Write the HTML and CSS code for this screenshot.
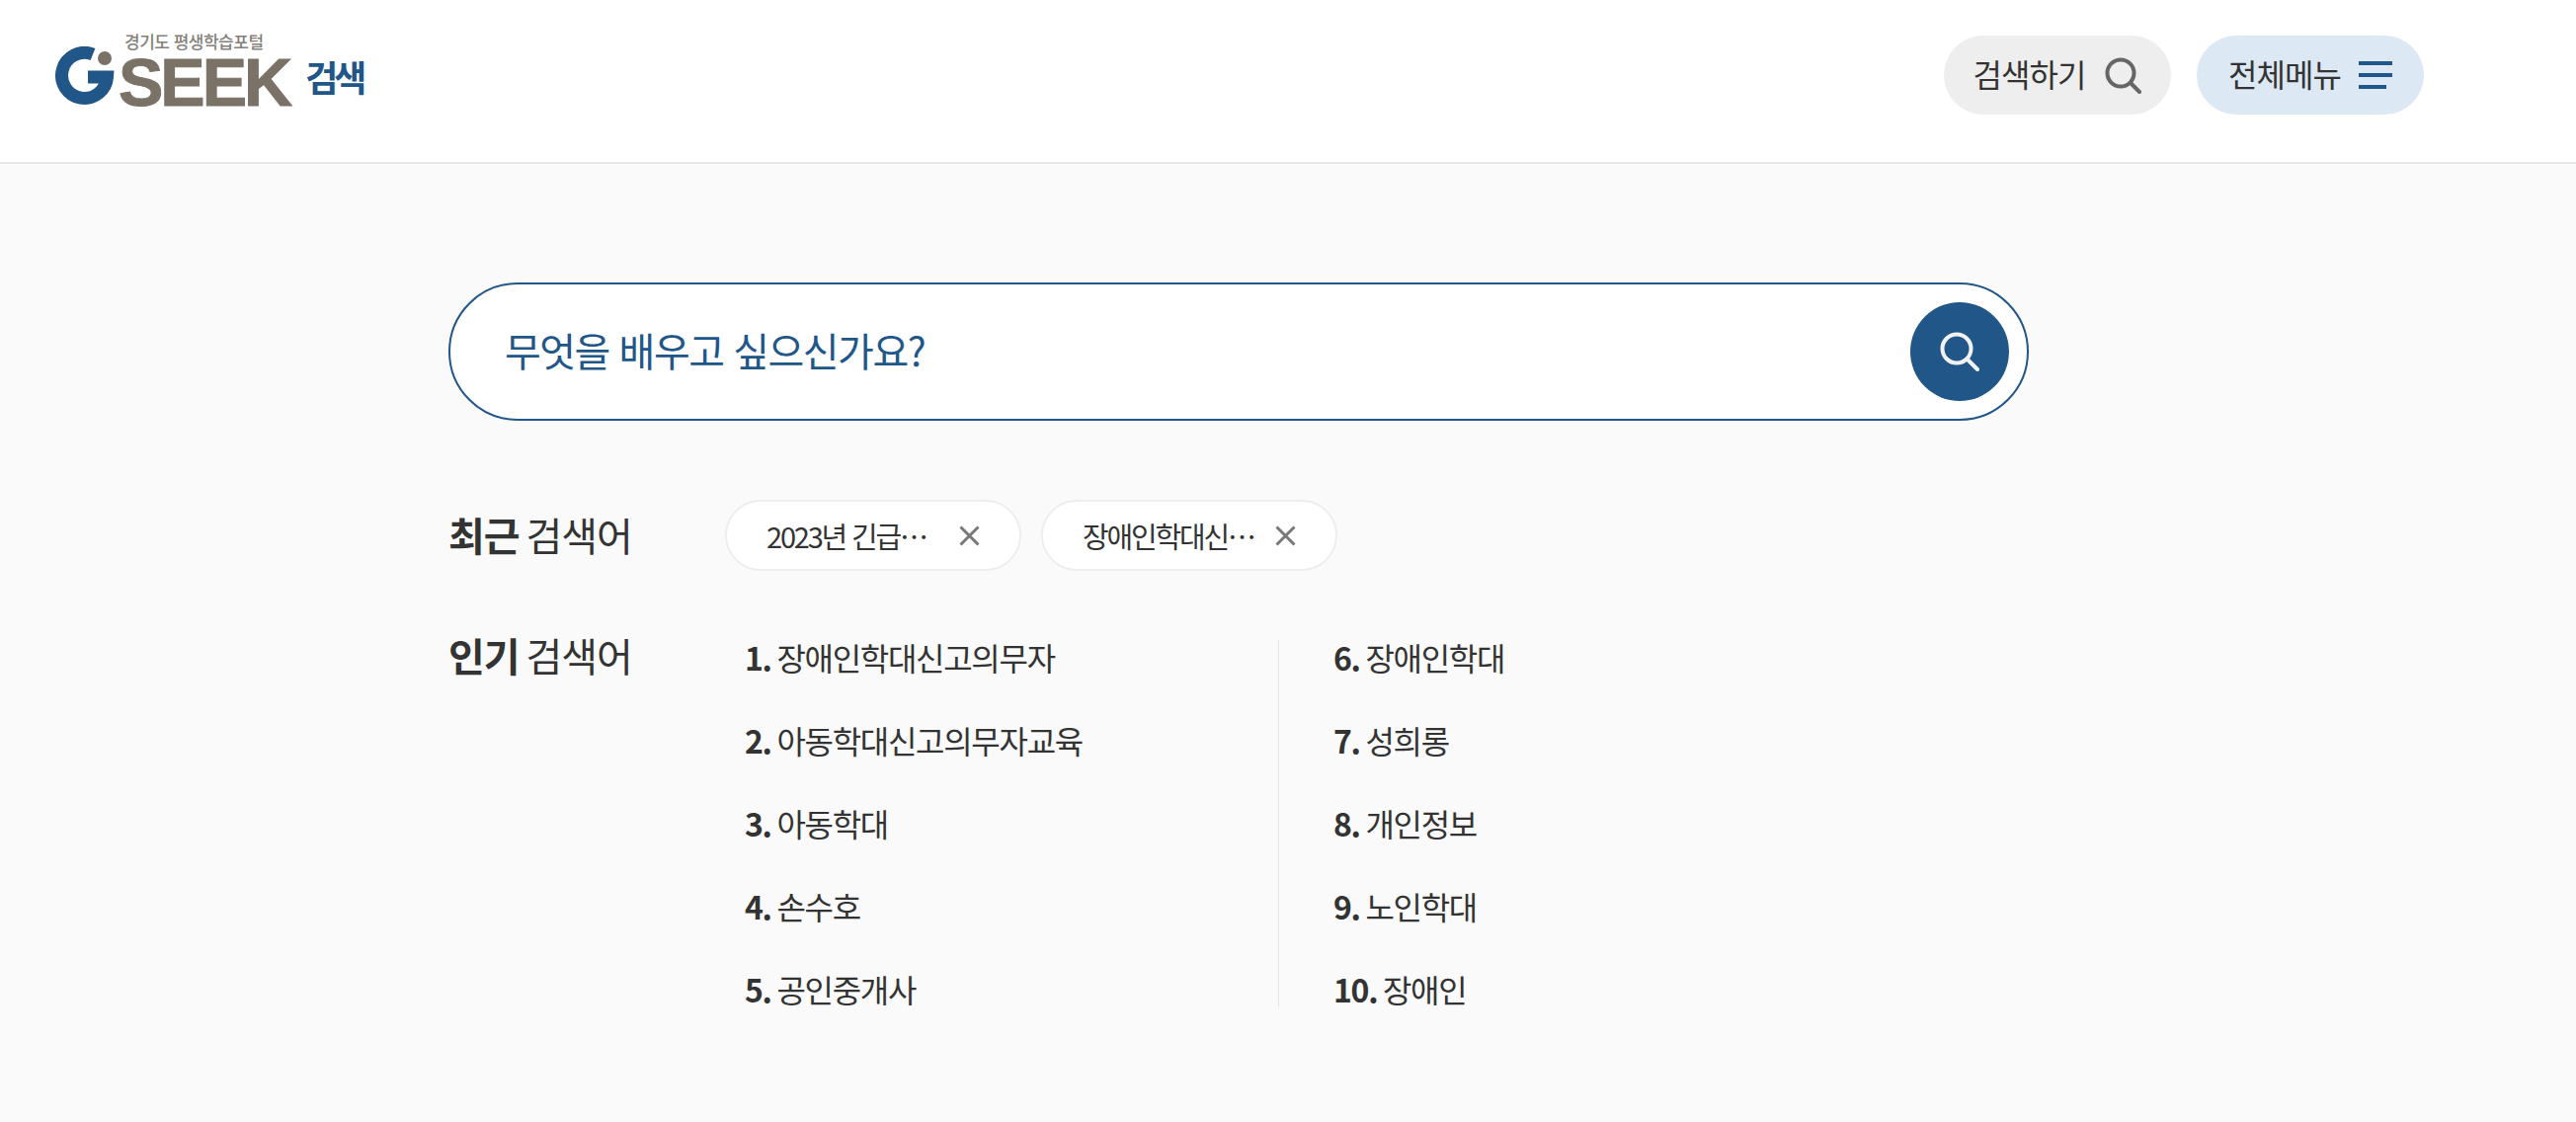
FILE: index.html
```html
<!DOCTYPE html>
<html lang="ko">
<head>
    <meta charset="UTF-8">
    <title>GSEEK 검색</title>
    <link rel="stylesheet" href="styles.css">
</head>
<body>
    <header class="site-header">
        <a class="logo" href="#">
            <svg class="logo-mark" width="60" height="60" viewBox="0 0 60 60">
                <path d="M38 8 A 23 23 0 1 0 52.5 31 H 33" fill="none" stroke="#215689" stroke-width="13"/>
                <circle cx="50" cy="12" r="7" fill="#7a7167"/>
            </svg>
            <span class="logo-text">
                <span class="logo-sub">경기도 평생학습포털</span>
                <span class="logo-name">SEEK</span>
            </span>
            <span class="logo-search">검색</span>
        </a>
        <nav class="header-buttons">
            <button class="pill pill-search"><span class="pill-label">검색하기</span>
                <svg width="37" height="37" viewBox="0 0 37 37" fill="none" stroke="#666" stroke-width="4">
                    <circle cx="16" cy="16" r="13.5"/>
                    <path d="M26 26 L35 35" stroke-linecap="round"/>
                </svg>
            </button>
            <button class="pill pill-menu"><span class="pill-label">전체메뉴</span>
                <svg width="34" height="28" viewBox="0 0 34 28" fill="#215689">
                    <rect x="0" y="0" width="34" height="4"/>
                    <rect x="0" y="12" width="34" height="4"/>
                    <rect x="0" y="24" width="28" height="4"/>
                </svg>
            </button>
        </nav>
    </header>

    <main class="search-page">
        <form class="search-box">
            <span class="search-placeholder">무엇을 배우고 싶으신가요?</span>
            <button class="search-submit" type="button">
                <svg width="40" height="40" viewBox="0 0 40 40" fill="none" stroke="#f2f2f2" stroke-width="4">
                    <circle cx="17" cy="17" r="14.5"/>
                    <path d="M28 28 L38 38" stroke-linecap="round"/>
                </svg>
            </button>
        </form>

        <section class="keyword-row recent-row">
            <h2 class="keyword-title"><strong>최근</strong> 검색어</h2>
            <div class="chips">
                <div class="chip"><span class="chip-text">2023년 긴급…</span>
                    <svg width="21" height="21" viewBox="0 0 21 21" stroke="#777" stroke-width="3"><path d="M1.5 1.5 L19.5 19.5 M19.5 1.5 L1.5 19.5"/></svg>
                </div>
                <div class="chip"><span class="chip-text">장애인학대신…</span>
                    <svg width="21" height="21" viewBox="0 0 21 21" stroke="#777" stroke-width="3"><path d="M1.5 1.5 L19.5 19.5 M19.5 1.5 L1.5 19.5"/></svg>
                </div>
            </div>
        </section>

        <section class="keyword-row popular-row">
            <h2 class="keyword-title"><strong>인기</strong> 검색어</h2>
            <div class="rank-lists">
                <ol class="rank-list">
                    <li><b>1.</b> 장애인학대신고의무자</li>
                    <li><b>2.</b> 아동학대신고의무자교육</li>
                    <li><b>3.</b> 아동학대</li>
                    <li><b>4.</b> 손수호</li>
                    <li><b>5.</b> 공인중개사</li>
                </ol>
                <ol class="rank-list">
                    <li><b>6.</b> 장애인학대</li>
                    <li><b>7.</b> 성희롱</li>
                    <li><b>8.</b> 개인정보</li>
                    <li><b>9.</b> 노인학대</li>
                    <li><b>10.</b> 장애인</li>
                </ol>
            </div>
        </section>
    </main>
</body>
</html>
```

FILE: styles.css
```css
* {
    box-sizing: border-box;
}

body {
    margin: 0;
    min-height: 1136px;
    background-color: #fafafa;
    color: #333;
    font-family: "Noto Sans CJK KR", "Noto Sans", sans-serif;
}

.site-header {
    display: flex;
    justify-content: space-between;
    align-items: flex-start;
    height: 166px;
    padding: 0 154px 0 56px;
    background-color: white;
    border-bottom: 2px solid #e8e8e8;
}

.logo {
    display: flex;
    align-items: flex-end;
    margin-top: 33px;
    color: inherit;
    text-decoration: none;
}

.logo-mark {
    margin-bottom: 1px;
}

.logo-text {
    display: flex;
    flex-direction: column;
    margin-left: 4px;
}

.logo-sub {
    margin-left: 6px;
    color: #85807a;
    font-size: 17px;
    font-weight: 500;
    line-height: 18px;
    letter-spacing: -0.5px;
}

.logo-name {
    margin-top: 7px;
    color: #7a7167;
    font-family: "Liberation Sans", Arial, sans-serif;
    font-size: 68px;
    font-weight: bold;
    line-height: 50px;
    letter-spacing: -3px;
    -webkit-text-stroke: 1px #7a7167;
}

.logo-search {
    margin: 0 0 6px 16px;
    color: #215689;
    font-size: 36px;
    font-weight: 700;
    line-height: 50px;
    letter-spacing: -4px;
}

.header-buttons {
    display: flex;
    gap: 26px;
    margin-top: 36px;
}

.pill {
    display: flex;
    justify-content: center;
    align-items: center;
    gap: 20px;
    width: 230px;
    height: 80px;
    border: none;
    border-radius: 40px;
    color: #333;
    font-family: inherit;
    font-size: 32px;
    letter-spacing: -1px;
}

.pill-label {
    padding-bottom: 4px;
}

.pill-search {
    background-color: #eeeeee;
}

.pill-menu {
    gap: 18px;
    background-color: #dce8f4;
}

.search-page {
    padding: 120px 0 0 454px;
}

.search-box {
    display: flex;
    justify-content: space-between;
    align-items: center;
    width: 1600px;
    height: 140px;
    padding: 0 18px 0 55px;
    background-color: white;
    border: 2px solid #215689;
    border-radius: 70px;
}

.search-placeholder {
    padding-bottom: 5px;
    color: #215689;
    font-size: 40px;
    letter-spacing: -1.5px;
}

.search-submit {
    display: flex;
    justify-content: center;
    align-items: center;
    width: 100px;
    height: 100px;
    padding: 0;
    background-color: #215689;
    border: none;
    border-radius: 50%;
}

.keyword-row {
    display: flex;
}

.keyword-title {
    flex: none;
    width: 280px;
    margin: 0;
    font-size: 40px;
    font-weight: 400;
    letter-spacing: -1.1px;
    word-spacing: -3px;
}

.keyword-title strong {
    font-weight: 700;
}

.recent-row {
    align-items: center;
    margin-top: 80px;
}

.recent-row .keyword-title {
    padding-bottom: 3px;
}

.chips {
    display: flex;
    gap: 20px;
}

.chip {
    display: flex;
    justify-content: space-between;
    align-items: center;
    width: 300px;
    height: 72px;
    padding: 0 40px;
    background-color: white;
    border: 2px solid #eeeeee;
    border-radius: 36px;
}

.chip-text {
    color: #333;
    font-size: 29px;
    letter-spacing: -2.2px;
}

.popular-row {
    margin-top: 70px;
}

.popular-row .keyword-title {
    line-height: 30px;
}

.rank-lists {
    display: flex;
    padding-left: 20px;
}

.rank-list {
    width: 540px;
    margin: 0;
    padding: 0;
    list-style: none;
    font-size: 32px;
    letter-spacing: -1.3px;
    word-spacing: -2px;
}

.rank-list + .rank-list {
    padding-left: 55px;
    border-left: 1px solid #e5e5e5;
}

.rank-list li {
    height: 84px;
    line-height: 34px;
}

.rank-list li:last-child {
    height: 36px;
}

.rank-list b {
    font-weight: 700;
}
```
